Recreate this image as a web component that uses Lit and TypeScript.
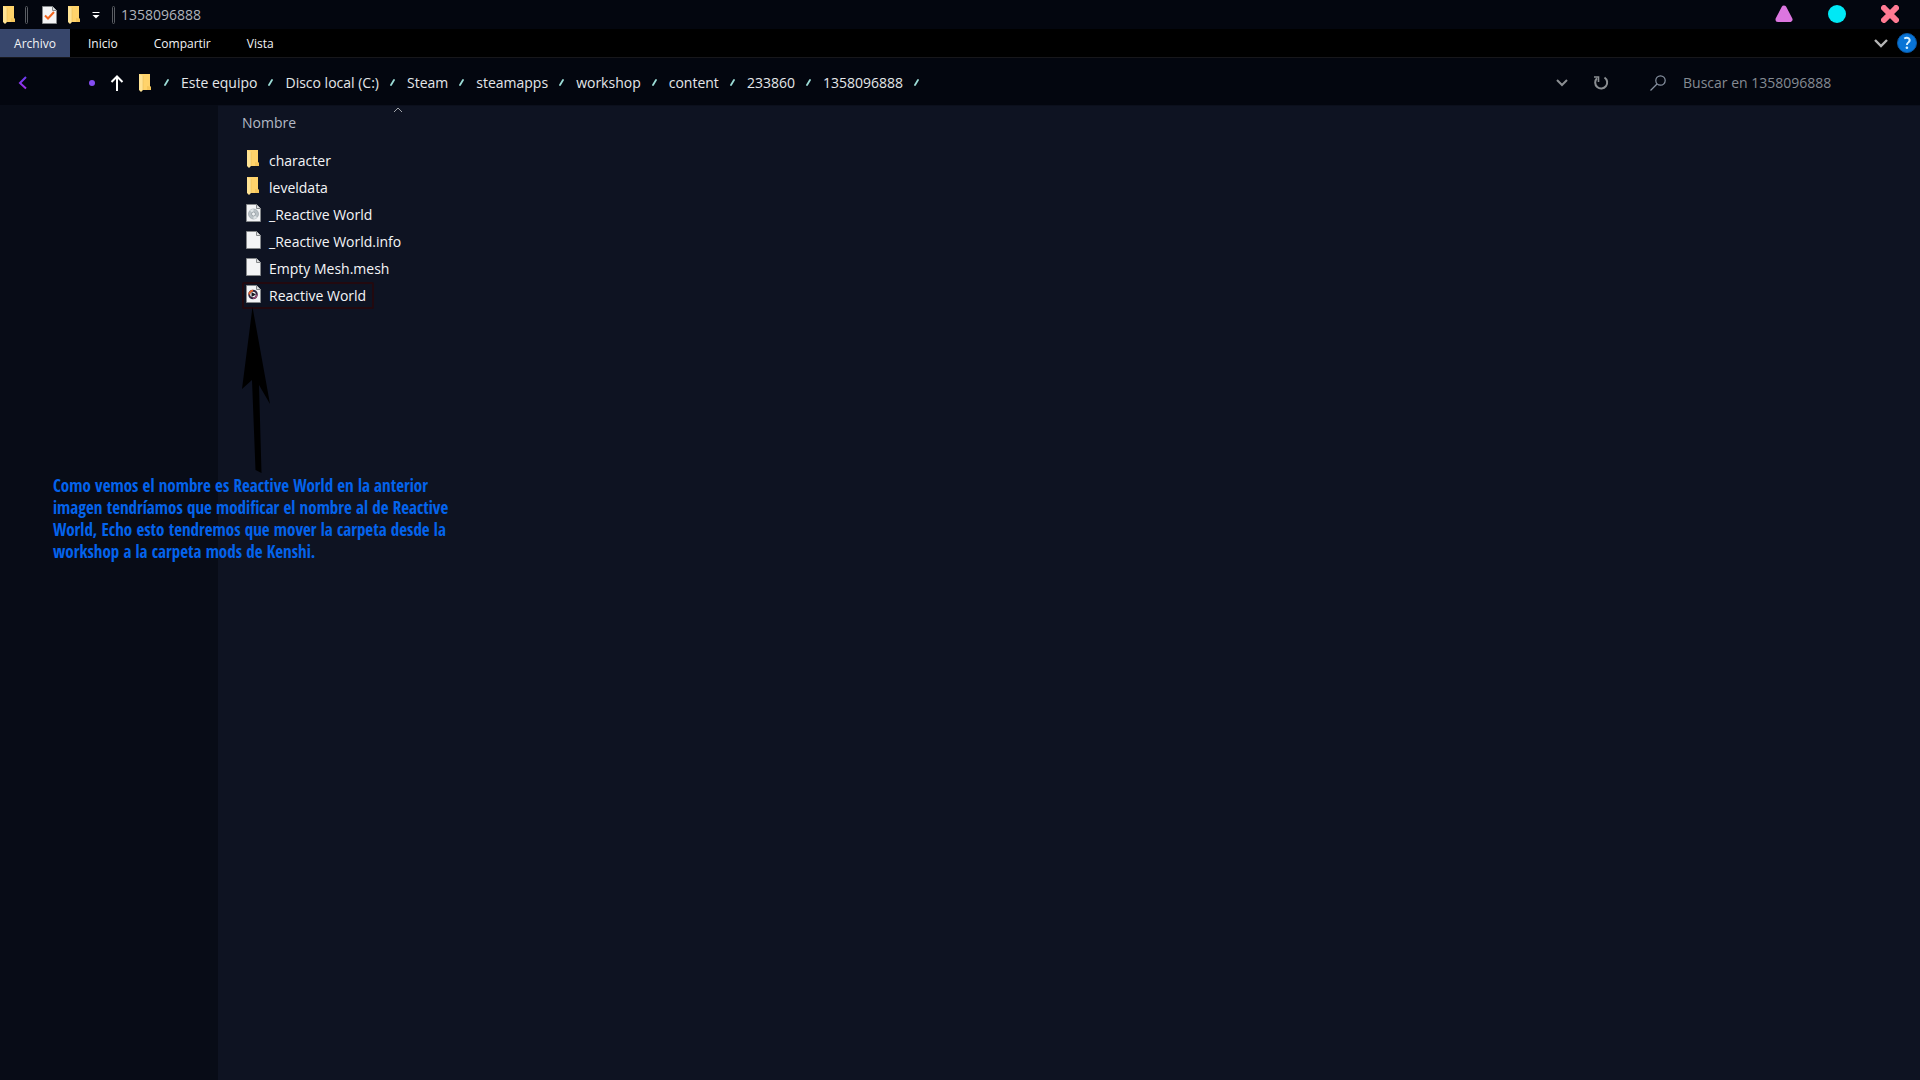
import { LitElement, html, css, svg } from "lit";
import { customElement } from "lit/decorators.js";

type IconName = "folder" | "disc" | "file" | "media" | "check";

const sheet = svg`
  <path d="M0.5 0.5H10.5L14.5 4.500V17.500H0.500Z" fill="#f3f4f6" stroke="#85888b"/>
  <path d="M10.500 0.500V4.500H14.500" fill="#dcdee0" stroke="#85888b"/>`;

const glyphs = {
  folder: svg`
    <path d="M1 0H12V12L13 13V16H1Z" fill="#ffd36b"/>
    <path d="M9 12L13 13V16H9Z" fill="#f6c65b"/>
    <path d="M1 0L5 2V16L3 18L1 16Z" fill="#ffe394"/>
    <path d="M5 2V16" stroke="#e8bd58" stroke-width="0.6"/>`,
  file: sheet,
  disc: svg`${sheet}
    <circle cx="7.500" cy="10" r="5" fill="#b9c1c6" stroke="#9aa2a8" stroke-width="0.7"/>
    <path d="M7.500 10L4 6.500A5 5 0 0 1 7.500 5Z M7.500 10L11 13.500A5 5 0 0 1 7.500 15Z" fill="#dde3e6"/>
    <circle cx="7.500" cy="10" r="2" fill="#eef1f3" stroke="#929ba1" stroke-width="0.8"/>`,
  media: svg`${sheet}
    <circle cx="7" cy="9.500" r="3.800" fill="#fff" stroke="#33263f" stroke-width="2"/>
    <path d="M3.200 9.500A3.800 3.800 0 0 1 7 5.700" fill="none" stroke="#e8622c" stroke-width="1.800"/>
    <path d="M10.800 9.500A3.800 3.800 0 0 1 7 13.300" fill="none" stroke="#a34d7a" stroke-width="1.400"/>
    <path d="M5.500 7L10 9.500L5.500 12Z" fill="#17181f"/>`,
  check: svg`${sheet}
    <path d="M3 9.500L6 12.500L12 6" fill="none" stroke="#f0641e" stroke-width="2"/>`,
};

const icon = (name: IconName) => html`<svg class="file-icon" width="15" height="18" viewBox="0 0 15 18" aria-hidden="true">${glyphs[name]}</svg>`;

const tabs = ["Inicio", "Compartir", "Vista"];
const crumbs = ["Este equipo", "Disco local (C:)", "Steam", "steamapps", "workshop", "content", "233860", "1358096888"];
const files: { name: string; icon: IconName; marked?: boolean }[] = [
  { name: "character", icon: "folder" },
  { name: "leveldata", icon: "folder" },
  { name: "_Reactive World", icon: "disc" },
  { name: "_Reactive World.info", icon: "file" },
  { name: "Empty Mesh.mesh", icon: "file" },
  { name: "Reactive World", icon: "media", marked: true },
];
const note = [
  "Como vemos el nombre es Reactive World en la anterior",
  "imagen tendríamos que modificar el nombre al de Reactive",
  "World, Echo esto tendremos que mover la carpeta desde la",
  "workshop a la carpeta mods de Kenshi.",
];

@customElement("app-root")
export class AppRoot extends LitElement {
  static styles = css`
    :host {
      display: flex;
      flex-direction: column;
      position: relative;
      min-height: 100vh;
      background: #03060f;
      color: #e4e6ea;
      font: 14px/20px "Open Sans", "Noto Sans", sans-serif;
    }
    * { box-sizing: border-box; }
    button, input {
      margin: 0;
      padding: 0;
      border: 0;
      background: none;
      color: inherit;
      font: inherit;
    }
    button { display: flex; align-items: center; justify-content: center; }
    a { color: inherit; text-decoration: none; }
    svg { display: block; flex: none; }

    .titlebar { display: flex; align-items: center; height: 29px; padding: 0 4px 0 2px; }
    .divider { width: 3px; height: 18px; border: 1px solid #5a5d63; border-radius: 2px; }
    .quick { display: flex; align-items: center; gap: 10px; margin: 0 12px 0 14px; }
    .titlebar > .divider:first-of-type { margin-left: 8px; }
    .title { margin: 0 auto 0 6px; font-size: 14px; font-weight: 400; line-height: 20px; color: #b0b4bc; }
    .window-button { width: 53px; height: 29px; padding-bottom: 1px; }

    .ribbon {
      display: flex;
      align-items: center;
      height: 29px;
      padding-right: 3px;
      background: #000;
      border-bottom: 1px solid #17171b;
      font-size: 12px;
    }
    .tab { height: 28px; padding: 2px 18px 0; color: #f2f3f5; }
    .tab.file { width: 70px; padding: 2px 0 0; background: #37466b; }
    .ribbon-end { display: flex; align-items: center; gap: 9px; margin-left: auto; }

    .address { display: flex; align-items: center; height: 47px; padding: 2px 0 0 18px; }
    .arrows { display: flex; align-items: center; }
    .recent { margin-left: 60px; }
    .up { margin-left: 14px; }
    .place { margin-left: 14px; }
    .crumbs { display: flex; align-items: center; gap: 12px; margin: 0 auto 0 11px; padding: 0; list-style: none; }
    .crumb { display: flex; align-items: center; gap: 11px; }
    .field-tools { display: flex; align-items: center; gap: 25px; color: #8b8e92; }
    .search { display: flex; align-items: center; gap: 17px; width: 270px; margin-left: 41px; }
    .search input { flex: 1; min-width: 0; height: 24px; }
    .search input::placeholder { color: #858b93; opacity: 1; }

    .body { display: flex; flex: 1; }
    .sidebar { flex: none; width: 218px; background: #080c17; }
    .files { flex: 1; background: #0e1322; border-top: 1px solid #0b0f1c; }
    table { border-collapse: collapse; }
    th { height: 41px; padding: 0 0 8px 24px; font-weight: 400; text-align: left; }
    .sort { position: relative; justify-content: flex-start; width: 174px; color: #b4bac6; }
    .sort svg { position: absolute; right: 13px; top: -6px; }
    td { height: 27px; padding: 0 0 0 24px; }
    .entry {
      display: flex;
      align-items: center;
      gap: 8px;
      width: max-content;
      height: 27px;
      padding: 0 6px 0 2px;
      border: 2px solid transparent;
      border-radius: 2px;
      color: #f4f5f7;
    }
    .entry.marked { border-color: #22090f; }
    .entry .file-icon { margin-bottom: 3px; }

    .arrow { position: absolute; left: 240px; top: 306px; }
    .note {
      position: absolute;
      left: 53px;
      top: 475px;
      margin: 0;
      color: #0463ec;
      font: 700 17px/22px "Open Sans Condensed", "Noto Sans Condensed", "Open Sans", sans-serif;
      white-space: nowrap;
    }
    .note span { display: block; }
  `;

  private slash() {
    return html`<svg width="5" height="8" viewBox="0 0 5 8" aria-hidden="true"><path d="M4 1L1 6" stroke="#9bdcd6" stroke-width="1.800" stroke-linecap="round"/></svg>`;
  }

  render() {
    return html`
      <header class="titlebar">
        ${icon("folder")}
        <span class="divider"></span>
        <div class="quick">
          <button aria-label="Propiedades">${icon("check")}</button>
          <button aria-label="Nueva carpeta">${icon("folder")}</button>
          <button aria-label="Personalizar">
            <svg width="8" height="8" viewBox="0 0 8 8"><path d="M0.500 1.500H7.500" stroke="#fff" stroke-width="1"/><path d="M0.500 4H7.500L4 7.500Z" fill="#fff"/></svg>
          </button>
        </div>
        <span class="divider"></span>
        <h1 class="title">1358096888</h1>
        <button class="window-button" aria-label="Minimizar">
          <svg width="20" height="20" viewBox="0 0 20 20"><path d="M10 4L16 15.500H4Z" fill="#dc76e0" stroke="#dc76e0" stroke-width="5" stroke-linejoin="round"/></svg>
        </button>
        <button class="window-button" aria-label="Maximizar">
          <svg width="18" height="18" viewBox="0 0 18 18"><circle cx="9" cy="9" r="9" fill="#00e8f5"/></svg>
        </button>
        <button class="window-button" aria-label="Cerrar">
          <svg width="18" height="18" viewBox="0 0 18 18"><path d="M3 3L15 15M15 3L3 15" stroke="#ff7a93" stroke-width="6" stroke-linecap="round"/></svg>
        </button>
      </header>

      <nav class="ribbon" aria-label="Cinta">
        <button class="tab file">Archivo</button>
        ${tabs.map((t) => html`<button class="tab">${t}</button>`)}
        <div class="ribbon-end">
          <button aria-label="Expandir">
            <svg width="14" height="9" viewBox="0 0 14 9"><path d="M1 1L7 7L13 1" fill="none" stroke="#b5b5b5" stroke-width="2.400"/></svg>
          </button>
          <button aria-label="Ayuda">
            <svg width="20" height="20" viewBox="0 0 20 20"><circle cx="10" cy="10" r="9.500" fill="#0874d6" stroke="#0b58a4"/><path d="M7.200 5.500Q10 4 12 5.500Q13.600 7.500 11.500 9.300Q9.800 10.500 9.900 12" fill="none" stroke="#d9f2ff" stroke-width="1.900"/><circle cx="9.900" cy="14.800" r="1.300" fill="#d9f2ff"/></svg>
          </button>
        </div>
      </nav>

      <div class="address">
        <div class="arrows">
          <button aria-label="Atrás">
            <svg width="10" height="14" viewBox="0 0 10 14"><path d="M8 1L2 7L8 12.500" fill="none" stroke="url(#back)" stroke-width="2"/><defs><linearGradient id="back" x1="0" y1="0" x2="0" y2="1"><stop stop-color="#6a3cf0"/><stop offset="1" stop-color="#a02fe8"/></linearGradient></defs></svg>
          </button>
          <button class="recent" aria-label="Ubicaciones recientes">
            <svg width="8" height="8" viewBox="0 0 8 8"><circle cx="4" cy="4" r="3" fill="#844cf2"/></svg>
          </button>
          <button class="up" aria-label="Subir">
            <svg width="14" height="16" viewBox="0 0 14 16"><path d="M7 16V2M1.500 7L7 1.500L12.500 7" fill="none" stroke="#fff" stroke-width="2"/></svg>
          </button>
        </div>
        <span class="place">${icon("folder")}</span>
        <ol class="crumbs">
          <li>${this.slash()}</li>
          ${crumbs.map((c) => html`<li class="crumb"><a href="#">${c}</a>${this.slash()}</li>`)}
        </ol>
        <div class="field-tools">
          <button aria-label="Historial">
            <svg width="12" height="8" viewBox="0 0 12 8"><path d="M1 1L6 6L11 1" fill="none" stroke="currentColor" stroke-width="2"/></svg>
          </button>
          <button aria-label="Actualizar">
            <svg width="16" height="16" viewBox="0 0 16 16"><path d="M11.500 2.500A6 6 0 1 1 4 3.200" fill="none" stroke="currentColor" stroke-width="2"/><path d="M1 2H5.500V7" fill="none" stroke="currentColor" stroke-width="1.600"/></svg>
          </button>
        </div>
        <label class="search">
          <svg width="16" height="16" viewBox="0 0 16 16" aria-hidden="true"><circle cx="10.500" cy="5.500" r="4.700" fill="none" stroke="#8791a0" stroke-width="1.200"/><path d="M7 9L0.500 15.500" stroke="#8791a0" stroke-width="1.300"/></svg>
          <input type="search" placeholder="Buscar en 1358096888" aria-label="Buscar en 1358096888" />
        </label>
      </div>

      <div class="body">
        <aside class="sidebar"></aside>
        <main class="files">
          <table>
            <thead>
              <tr><th scope="col" aria-sort="ascending">
                <button class="sort">Nombre<svg width="10" height="6" viewBox="0 0 10 6" aria-hidden="true"><path d="M1 5L5 1L9 5" fill="none" stroke="#a2a5ab"/></svg></button>
              </th></tr>
            </thead>
            <tbody>
              ${files.map((f) => html`<tr><td><a href="#" class="entry ${f.marked ? "marked" : ""}">${icon(f.icon)}<span>${f.name}</span></a></td></tr>`)}
            </tbody>
          </table>
        </main>
      </div>

      <svg class="arrow" width="32" height="168" viewBox="0 0 32 168" aria-hidden="true">
        <path d="M12.500 1L30 98L19 79L21.500 167L15.500 164L12 74L2 83Z" fill="#000"/>
      </svg>
      <p class="note">${note.map((l) => html`<span>${l}</span>`)}</p>
    `;
  }
}
